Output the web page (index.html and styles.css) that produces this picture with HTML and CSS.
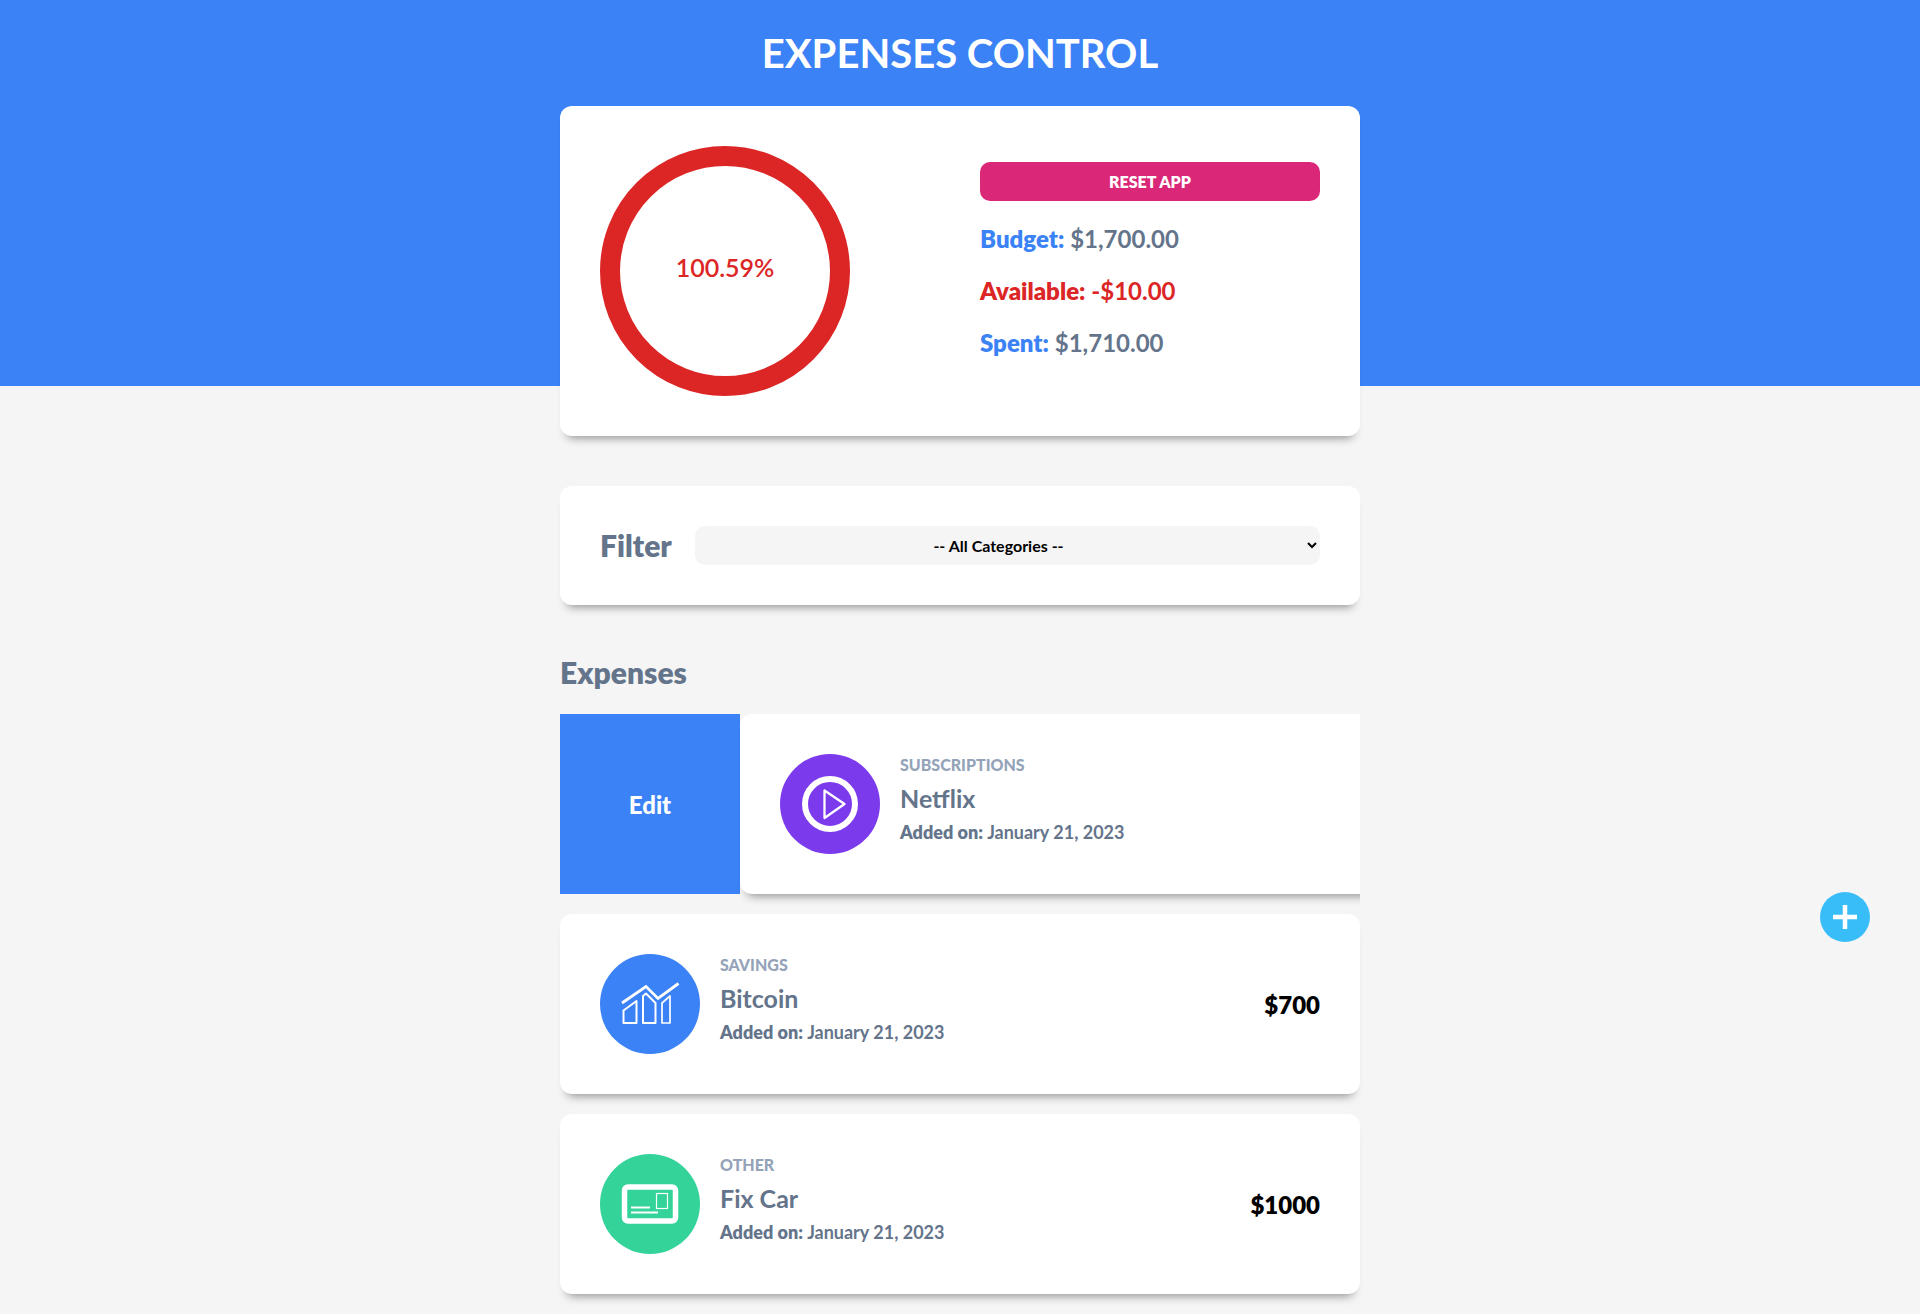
FILE: index.html
```html
<!DOCTYPE html>
<html lang="en">
<head>
<meta charset="utf-8">
<meta name="viewport" content="width=device-width, initial-scale=1">
<title>Expenses Control</title>
<link rel="stylesheet" href="styles.css">
</head>
<body>
<header class="header">
  <h1 class="title">Expenses Control</h1>
  <section class="card summary">
    <div class="chart">
      <svg class="chart-ring" viewBox="0 0 100 100" aria-hidden="true"><circle cx="50" cy="50" r="46" fill="none" stroke="#dc2626" stroke-width="8"/></svg>
      <span class="chart-value">100.59%</span>
    </div>
    <div class="figures">
      <button class="reset" type="button">Reset App</button>
      <p class="figure"><span class="label">Budget:</span> $1,700.00</p>
      <p class="figure figure-negative"><span class="label">Available:</span> -$10.00</p>
      <p class="figure"><span class="label">Spent:</span> $1,710.00</p>
    </div>
  </section>
</header>
<main class="main">
  <form class="card filter">
    <label class="filter-label" for="category">Filter</label>
    <select class="filter-select" id="category">
      <option>-- All Categories --</option>
      <option>Savings</option>
      <option>Subscriptions</option>
      <option>Other</option>
    </select>
  </form>
  <h2 class="subtitle">Expenses</h2>
  <div class="list">
    <div class="swipe">
      <button class="edit" type="button">Edit</button>
      <article class="card expense">
        <svg class="icon" viewBox="0 0 100 100" aria-hidden="true">
          <circle cx="50" cy="50" r="50" fill="#7c3aed"/>
          <circle cx="50" cy="50" r="25" fill="none" stroke="#fff" stroke-width="6"/>
          <path d="M44.500 36.500V64L64.500 50Z" fill="none" stroke="#fff" stroke-width="2.300" stroke-linejoin="round"/>
        </svg>
        <div class="details">
          <p class="category">Subscriptions</p>
          <p class="name">Netflix</p>
          <p class="date">Added on: <span class="day">January 21, 2023</span></p>
        </div>
      </article>
    </div>
    <article class="card expense">
      <svg class="icon" viewBox="0 0 100 100" aria-hidden="true">
        <circle cx="50" cy="50" r="50" fill="#3b82f6"/>
        <g fill="none" stroke="#fff" stroke-width="2" stroke-linejoin="round">
          <path d="M22 49L46 32.500L58 44.500L78.500 29.500" stroke-width="2.800" stroke-linejoin="miter"/>
          <path d="M23.500 69V56.500L36.500 47V69Z"/>
          <path d="M43 69V42L46 39.500L55.500 49V69Z"/>
          <path d="M62 69V49L70 42V69Z" stroke-width="1.700"/>
        </g>
      </svg>
      <div class="details">
        <p class="category">Savings</p>
        <p class="name">Bitcoin</p>
        <p class="date">Added on: <span class="day">January 21, 2023</span></p>
      </div>
      <p class="amount">$700</p>
    </article>
    <article class="card expense">
      <svg class="icon" viewBox="0 0 100 100" aria-hidden="true">
        <circle cx="50" cy="50" r="50" fill="#34d399"/>
        <g fill="none" stroke="#fff">
          <rect x="24.500" y="33" width="51" height="34" rx="3.500" stroke-width="5.500"/>
          <rect x="56.500" y="39.500" width="11" height="15" stroke-width="1.200"/>
          <path d="M31 53.500H50M31 58.500H58" stroke-width="2.200"/>
        </g>
      </svg>
      <div class="details">
        <p class="category">Other</p>
        <p class="name">Fix Car</p>
        <p class="date">Added on: <span class="day">January 21, 2023</span></p>
      </div>
      <p class="amount">$1000</p>
    </article>
  </div>
</main>
<button class="add" type="button" aria-label="New expense">
  <svg class="add-icon" viewBox="0 0 50 50" aria-hidden="true"><circle cx="25" cy="25" r="25" fill="#38bdf8"/><path d="M25 13V37M13 25H37" stroke="#fff" stroke-width="4.500"/></svg>
</button>
</body>
</html>
```
FILE: styles.css
```css
* {
  box-sizing: border-box;
}

body {
  margin: 0;
  background: #f5f5f5;
  color: #64748b;
  font-family: Lato, sans-serif;
  font-size: 16px;
  font-weight: 700;
}

h1, h2, p {
  margin: 0;
}

button, select {
  border: 0;
  font-family: inherit;
  cursor: pointer;
}

.header {
  padding-top: 29px;
  background: linear-gradient(#3b82f6, #3b82f6) no-repeat top / 100% calc(100% - 50px);
}

.title {
  margin-bottom: 29px;
  color: #fff;
  font-size: 40px;
  font-weight: 700;
  line-height: 48px;
  text-align: center;
  text-transform: uppercase;
}

.card {
  padding: 40px;
  border-radius: 12px;
  background: #fff;
  box-shadow: 0 9px 10px -7px rgba(0, 0, 0, 0.42);
}

.summary, .main {
  width: 90%;
  max-width: 800px;
  margin: 0 auto;
}

.summary {
  display: grid;
  grid-template-columns: 1fr 1fr;
  gap: 40px;
  align-items: center;
}

.chart {
  display: grid;
  place-items: center;
  width: 250px;
}

.chart-ring, .chart-value {
  grid-area: 1 / 1;
}

.chart-ring {
  display: block;
  width: 100%;
}

.chart-value {
  padding-bottom: 8px;
  color: #dc2626;
  font-size: 25px;
  font-weight: 600;
}

.figures {
  display: flex;
  flex-direction: column;
  gap: 20px;
  padding-bottom: 22px;
}

.reset {
  height: 39px;
  margin-bottom: 2px;
  border-radius: 10px;
  background: #db2777;
  color: #fff;
  font-size: 16px;
  font-weight: 800;
  text-transform: uppercase;
}

.figure {
  font-size: 24px;
  line-height: 32px;
}

.label {
  color: #3b82f6;
  font-weight: 800;
}

.figure-negative, .figure-negative .label {
  color: #dc2626;
}

.main {
  padding: 50px 0 20px;
}

.filter {
  display: flex;
  align-items: center;
  gap: 20px;
}

.filter-label {
  min-width: 75px;
  font-size: 30px;
  font-weight: 800;
  line-height: 39px;
}

.filter-select {
  flex: 1;
  height: 39px;
  padding-right: 6px;
  border-radius: 10px;
  background: #f5f5f5;
  color: #000;
  font-size: 16px;
  font-weight: 700;
  text-align: center;
}

.subtitle {
  margin: 49px 0 24px;
  font-size: 30px;
  font-weight: 800;
  line-height: 36px;
}

.list {
  display: grid;
  gap: 20px;
}

.swipe {
  display: flex;
  margin-bottom: -20px;
  padding-bottom: 20px;
  overflow: hidden;
}

.edit {
  flex: 0 0 180px;
  background: #3b82f6;
  color: #fff;
  font-size: 24px;
  font-weight: 900;
}

.expense {
  display: flex;
  align-items: center;
  gap: 20px;
}

.swipe .expense {
  flex: 0 0 100%;
}

.icon {
  flex: none;
  width: 100px;
  height: 100px;
}

.details {
  flex: 1;
  padding-bottom: 10px;
}

.category {
  margin-bottom: 8px;
  color: #94a3b8;
  font-size: 16px;
  font-weight: 900;
  line-height: 20px;
  text-transform: uppercase;
}

.name {
  margin-bottom: 7px;
  font-size: 25px;
  line-height: 30px;
}

.date {
  font-size: 18px;
  font-weight: 800;
  line-height: 24px;
}

.day {
  font-weight: 700;
}

.amount {
  color: #000;
  font-size: 24px;
  font-weight: 800;
}

.add {
  position: fixed;
  right: 50px;
  top: 892px;
  padding: 0;
  background: none;
}

.add-icon {
  display: block;
  width: 50px;
  height: 50px;
}
```
